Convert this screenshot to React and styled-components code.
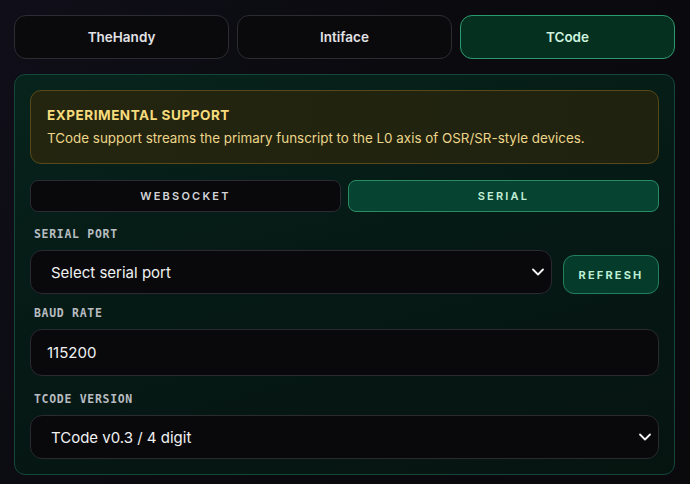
import React, { useState } from "react";
import styled, { createGlobalStyle } from "styled-components";
import { ChevronDown } from "lucide-react";

const SANS = `Inter, "Noto Sans", "Liberation Sans", sans-serif`;
const MONO = `"DejaVu Sans Mono", "Liberation Mono", monospace`;

const GlobalStyle = createGlobalStyle`
   html, body {
      margin: 0;
      padding: 0;
      background: #0b0a11;
   }
   body {
      font-family: ${SANS};
      color: #e4e4e7;
   }
   * { box-sizing: border-box; }
`;

const Page = styled.div`
   width: 690px;
   height: 484px;
   padding: 15px 15px 0 14px;
   background: linear-gradient(120deg, #100f19 0%, #0a0a0f 45%, #0a0a0d 100%);
   overflow: hidden;
`;

const DeviceTabs = styled.div`
   display: grid;
   grid-template-columns: repeat(3, 1fr);
   gap: 8px;
`;

const DeviceTab = styled.button`
   height: 44px;
   border-radius: 12px;
   font-family: ${SANS};
   font-size: 13.5px;
   font-weight: 600;
   cursor: pointer;
   border: 1px solid ${(p) => (p.$active ? "#2c9a70" : "#2c2c32")};
   background: ${(p) => (p.$active ? "#05301f" : "#0a0a0d")};
   color: ${(p) => (p.$active ? "#cdf3df" : "#e2e2e6")};
`;

const Panel = styled.section`
   margin-top: 15px;
   padding: 15px 15px 15px;
   border: 1px solid #15463a;
   border-radius: 11px;
   background: linear-gradient(165deg, #07241c 0%, #061a15 45%, #061410 100%);
`;

const Notice = styled.div`
   padding: 14px 16px 15px;
   border: 1px solid #564818;
   border-radius: 11px;
   background: linear-gradient(90deg, #23250f 0%, #1f220f 100%);
`;

const NoticeTitle = styled.div`
   font-size: 13.5px;
   line-height: 20px;
   font-weight: 700;
   letter-spacing: 0.04em;
   color: #f6db7c;
`;

const NoticeText = styled.div`
   margin-top: 3px;
   font-size: 13.4px;
   line-height: 20px;
   color: #ecd58a;
`;

const ModeSwitch = styled.div`
   margin-top: 16px;
   display: grid;
   grid-template-columns: 1fr 1fr;
   gap: 7px;
`;

const ModeButton = styled.button`
   height: 32px;
   border-radius: 8px;
   font-family: ${SANS};
   font-size: 11px;
   font-weight: 600;
   letter-spacing: 0.2em;
   cursor: pointer;
   border: 1px solid ${(p) => (p.$active ? "#2a8c65" : "#2a2a30")};
   background: ${(p) => (p.$active ? "#064331" : "#09090c")};
   color: ${(p) => (p.$active ? "#c4efd8" : "#d4d4d8")};
`;

const Field = styled.div`
   margin-top: ${(p) => p.$top}px;
`;

const Label = styled.div`
   padding-left: 4px;
   font-family: ${MONO};
   font-size: 11.5px;
   line-height: 16px;
   font-weight: 700;
   letter-spacing: 0.06em;
   color: #b8bcc0;
   margin-bottom: 8px;
`;

const Row = styled.div`
   display: flex;
   align-items: flex-end;
   gap: 11px;
`;

const SelectWrap = styled.div`
   position: relative;
   flex: 1;
`;

const Select = styled.div`
   height: 44px;
   display: flex;
   align-items: center;
   padding: 0 20px;
   border: 1px solid #2a2a2f;
   border-radius: 12px;
   background: #09090b;
   font-size: 15px;
   color: #f1f1f3;
`;

const Chevron = styled(ChevronDown)`
   position: absolute;
   right: 4px;
   top: 50%;
   transform: translateY(-50%);
   color: #f4f4f5;
`;

const Input = styled.div`
   height: 47px;
   display: flex;
   align-items: center;
   padding: 0 16px;
   border: 1px solid #2a2a2f;
   border-radius: 12px;
   background: #09090b;
   font-size: 15px;
   color: #f1f1f3;
`;

const RefreshButton = styled.button`
   width: 96px;
   height: 39px;
   border: 1px solid #23805c;
   border-radius: 11px;
   background: #053b2b;
   color: #bdeed4;
   font-family: ${SANS};
   font-size: 11px;
   font-weight: 700;
   letter-spacing: 0.2em;
   cursor: pointer;
`;

function Dropdown({ children }) {
   return (
      <SelectWrap>
         <Select>{children}</Select>
         <Chevron size={20} strokeWidth={2.2} />
      </SelectWrap>
   );
}

export default function App() {
   const [device, setDevice] = useState("TCode");
   const [mode, setMode] = useState("serial");

   return (
      <>
         <GlobalStyle />
         <Page>
            <DeviceTabs>
               {["TheHandy", "Intiface", "TCode"].map((name) => (
                  <DeviceTab key={name} $active={device === name} onClick={() => setDevice(name)}>
                     {name}
                  </DeviceTab>
               ))}
            </DeviceTabs>

            <Panel>
               <Notice>
                  <NoticeTitle>EXPERIMENTAL SUPPORT</NoticeTitle>
                  <NoticeText>
                     TCode support streams the primary funscript to the L0 axis of OSR/SR-style devices.
                  </NoticeText>
               </Notice>

               <ModeSwitch>
                  <ModeButton $active={mode === "websocket"} onClick={() => setMode("websocket")}>
                     WEBSOCKET
                  </ModeButton>
                  <ModeButton $active={mode === "serial"} onClick={() => setMode("serial")}>
                     SERIAL
                  </ModeButton>
               </ModeSwitch>

               <Field $top={14}>
                  <Label>SERIAL PORT</Label>
                  <Row>
                     <Dropdown>Select serial port</Dropdown>
                     <RefreshButton>REFRESH</RefreshButton>
                  </Row>
               </Field>

               <Field $top={11}>
                  <Label>BAUD RATE</Label>
                  <Input>115200</Input>
               </Field>

               <Field $top={15}>
                  <Label>TCODE VERSION</Label>
                  <Dropdown>TCode v0.3 / 4 digit</Dropdown>
               </Field>
            </Panel>
         </Page>
      </>
   );
}
